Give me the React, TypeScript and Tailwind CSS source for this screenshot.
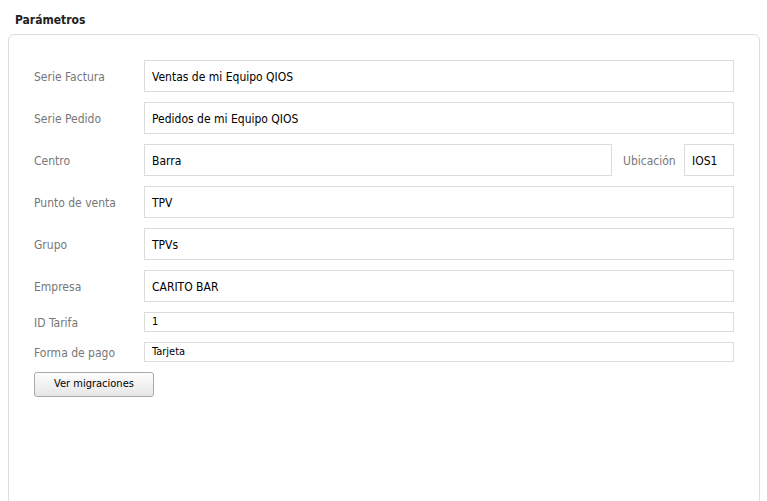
const font = { fontFamily: '"DejaVu Sans Condensed", "DejaVu Sans", Tahoma, sans-serif' };

type Row = { label: string; value: string };

const bigRows: Row[] = [
  { label: "Punto de venta", value: "TPV" },
  { label: "Grupo", value: "TPVs" },
  { label: "Empresa", value: "CARITO BAR" },
];

function Label({ children }: { children: string }) {
  return <div className="w-[110px] shrink-0 pt-[2px] text-[12px] text-[#777]">{children}</div>;
}

function Field({ value, className = "" }: { value: string; className?: string }) {
  return (
    <div className={`flex h-[32px] items-center border border-[#dcdcdc] bg-white px-[7px] pt-[2px] text-[12px] text-black ${className}`}>
      {value}
    </div>
  );
}

function SmallField({ value }: { value: string }) {
  return (
    <div className="flex h-[20px] flex-1 items-center border border-[#dcdcdc] bg-white px-[7px] pt-[1px] text-[11px] text-black">
      {value}
    </div>
  );
}

export default function App() {
  return (
    <div className="min-h-[501px] bg-white" style={font}>
      <div className="flex h-[34px] items-start px-[15px] pt-[11px] text-[12px] font-bold text-[#222]">Parámetros</div>
      <div className="ml-[8px] mr-[7px] min-h-[480px] rounded-t-[6px] border border-[#dddddd] px-[25px] pt-[25px]">
        <div className="flex flex-col gap-[10px]">
          <div className="flex items-center">
            <Label>Serie Factura</Label>
            <Field value="Ventas de mi Equipo QIOS" className="flex-1" />
          </div>
          <div className="flex items-center">
            <Label>Serie Pedido</Label>
            <Field value="Pedidos de mi Equipo QIOS" className="flex-1" />
          </div>
          <div className="flex items-center">
            <Label>Centro</Label>
            <Field value="Barra" className="flex-1" />
            <div className="ml-[11px] w-[61px] shrink-0 pt-[2px] text-[12px] text-[#777]">Ubicación</div>
            <Field value="IOS1" className="w-[50px]" />
          </div>
          {bigRows.map((r) => (
            <div key={r.label} className="flex items-center">
              <Label>{r.label}</Label>
              <Field value={r.value} className="flex-1" />
            </div>
          ))}
          <div className="flex items-center">
            <Label>ID Tarifa</Label>
            <SmallField value="1" />
          </div>
          <div className="flex items-center">
            <Label>Forma de pago</Label>
            <SmallField value="Tarjeta" />
          </div>
          <div className="flex">
            <button
              type="button"
              className="block h-[25px] w-[120px] rounded-[3px] border border-[#a9a9a9] bg-gradient-to-b from-[#fdfdfd] to-[#e6e6e6] text-[11px] text-black"
              style={font}
            >
              Ver migraciones
            </button>
          </div>
        </div>
      </div>
    </div>
  );
}
